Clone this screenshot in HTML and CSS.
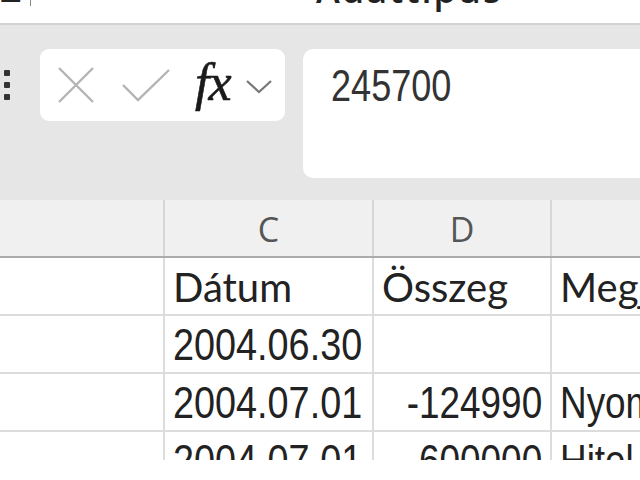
FILE: index.html
```html
<html>
<head>
	<link rel="stylesheet" href="styles.css">
	<title>Munkafüzet</title>
</head>
<body>
	<div class="titlebar">
		<span class="sigma">&Sigma;</span>
		<span class="sep"></span>
		<span class="caption">Adattípus</span>
	</div>

	<div class="formulabar">
		<div class="grip">
			<span class="dot"></span>
			<span class="dot"></span>
			<span class="dot"></span>
		</div>
		<div class="namebox">
			<svg class="icon-x" width="38" height="36" viewBox="0 0 38 36">
				<path d="M2 1 L36 35 M36 1 L2 35" stroke="#b4b4b4" stroke-width="2.4" fill="none"/>
			</svg>
			<svg class="icon-ok" width="50" height="34" viewBox="0 0 50 34">
				<path d="M2 17 L17 32 L48 2" stroke="#b4b4b4" stroke-width="2.4" fill="none"/>
			</svg>
			<span class="fx">fx</span>
			<svg class="icon-chev" width="28" height="16" viewBox="0 0 28 16">
				<path d="M2 2 L14 13 L26 2" stroke="#777" stroke-width="2.2" fill="none"/>
			</svg>
		</div>
		<div class="formula"><span class="narrow">245700</span></div>
	</div>

	<div class="sheet">
		<div class="row head">
			<div class="cell corner"></div>
			<div class="cell col">C</div>
			<div class="cell col">D</div>
			<div class="cell col"></div>
		</div>
		<div class="row">
			<div class="cell blank"></div>
			<div class="cell label">Dátum</div>
			<div class="cell label">Összeg</div>
			<div class="cell label">Megjegyzés</div>
		</div>
		<div class="row">
			<div class="cell blank"></div>
			<div class="cell num date"><span class="narrow">2004.06.30</span></div>
			<div class="cell num right"></div>
			<div class="cell num"></div>
		</div>
		<div class="row">
			<div class="cell blank"></div>
			<div class="cell num date"><span class="narrow">2004.07.01</span></div>
			<div class="cell num right"><span class="narrow">-124990</span></div>
			<div class="cell num"><span class="narrow">Nyomtató</span></div>
		</div>
		<div class="row">
			<div class="cell blank"></div>
			<div class="cell num date"><span class="narrow">2004.07.01</span></div>
			<div class="cell num right"><span class="narrow">-600000</span></div>
			<div class="cell num"><span class="narrow">Hitel</span></div>
		</div>
	</div>
</body>
</html>
```

FILE: styles.css
```css
body {
	margin: 0;
	width: 640px;
	height: 480px;
	overflow: hidden;
	background-color: #ffffff;
	font-family: "Liberation Sans", Arial, sans-serif;
}

.titlebar {
	height: 23px;
	border-bottom: 2px solid #d2d2d2;
	background-color: #ffffff;
	overflow: hidden;
	position: relative;
	font-family: "Open Sans", sans-serif;
	color: #222;
}
.sigma {
	position: absolute;
	left: 0;
	top: -36px;
	font-size: 36px;
	font-weight: bold;
}
.sep {
	position: absolute;
	left: 30px;
	top: 0;
	width: 1px;
	height: 6px;
	background-color: #888;
}
.caption {
	position: absolute;
	left: 316px;
	top: -35px;
	font-size: 36px;
	font-weight: 600;
	letter-spacing: 2px;
}

.formulabar {
	height: 175px;
	background-color: #e6e6e6;
	display: flex;
	align-items: flex-start;
	padding-top: 24px;
	box-sizing: border-box;
}
.grip {
	width: 40px;
	padding-top: 21px;
	display: flex;
	flex-direction: column;
	align-items: center;
	gap: 6px;
	margin-left: -13px;
	margin-right: 13px;
}
.dot {
	width: 6px;
	height: 6px;
	background-color: #333;
	border-radius: 1px;
}
.namebox {
	width: 245px;
	height: 72px;
	background-color: #ffffff;
	border-radius: 9px;
	display: flex;
	align-items: center;
	box-sizing: border-box;
	padding-left: 17px;
}
.icon-x {
	margin-right: 26px;
}
.icon-ok {
	margin-right: 24px;
}
.fx {
	font-family: "Liberation Serif", serif;
	font-style: italic;
	font-size: 52px;
	color: #1a1a1a;
	margin-top: -6px;
	margin-right: 14px;
	letter-spacing: -1px;
	-webkit-text-stroke: 0.6px #1a1a1a;
}
.icon-chev {
	margin-top: 4px;
}
.formula {
	flex: 1;
	margin-left: 18px;
	height: 129px;
	background-color: #ffffff;
	border-radius: 10px 0 0 10px;
	padding: 12px 0 0 28px;
	box-sizing: border-box;
	font-size: 44px;
	color: #333;
}

.narrow {
	display: inline-block;
	transform: scaleX(0.82);
	transform-origin: left center;
}
.right .narrow {
	transform-origin: right center;
}
.date .narrow {
	transform: scaleX(0.84);
}

.sheet {
	height: 260px;
	overflow: hidden;
	background-color: #ffffff;
}
.row {
	display: grid;
	grid-template-columns: 163px 209px 178px 1fr;
	height: 58px;
	border-bottom: 2px solid #dcdcdc;
	box-sizing: border-box;
}
.row.head {
	background-color: #f0f0f0;
	border-bottom: 2px solid #ababab;
}
.cell {
	display: flex;
	align-items: center;
	padding: 0 8px;
	border-left: 2px solid #dcdcdc;
	white-space: nowrap;
	overflow: hidden;
	color: #222;
}
.cell.corner, .cell.blank {
	border-left: none;
}
.col {
	justify-content: center;
	font-family: "Open Sans", sans-serif;
	font-size: 34px;
	color: #555;
	border-left-color: #d6d6d6;
	padding-top: 2px;
}
.label {
	font-family: "Lato", sans-serif;
	font-size: 40px;
	padding-top: 2px;
}
.num {
	font-size: 45px;
	padding-top: 2px;
}
.right {
	justify-content: flex-end;
}
```
